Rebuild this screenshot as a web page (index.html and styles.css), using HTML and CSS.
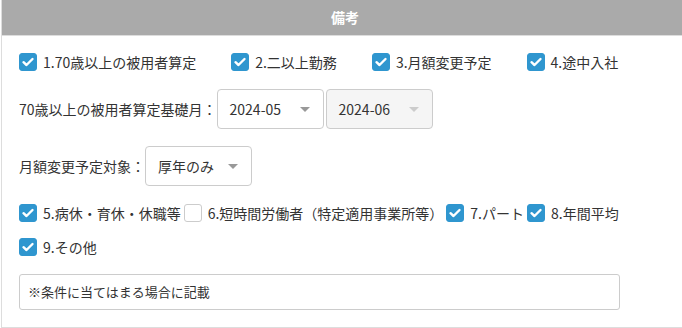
FILE: index.html
```html
<!DOCTYPE html>
<html lang="ja">
<head>
    <meta charset="UTF-8">
    <title>備考</title>
    <link rel="stylesheet" href="styles.css">
</head>
<body>
    <div class="panel">
        <div class="panel-header">備考</div>
        <div class="panel-body">

            <!-- 区分チェック -->
            <div class="check-row wide">
                <label class="check"><span class="box on"></span>1.70歳以上の被用者算定</label>
                <label class="check"><span class="box on"></span>2.二以上勤務</label>
                <label class="check"><span class="box on"></span>3.月額変更予定</label>
                <label class="check"><span class="box on"></span>4.途中入社</label>
            </div>

            <div class="field-row">
                <span class="field-label">70歳以上の被用者算定基礎月：</span>
                <div class="select">2024-05<span class="caret"></span></div>
                <div class="select disabled">2024-06<span class="caret"></span></div>
            </div>

            <div class="field-row">
                <span class="field-label">月額変更予定対象：</span>
                <div class="select">厚年のみ<span class="caret"></span></div>
            </div>

            <div class="check-row narrow">
                <label class="check"><span class="box on"></span>5.病休・育休・休職等</label>
                <label class="check"><span class="box"></span>6.短時間労働者（特定適用事業所等）</label>
                <label class="check"><span class="box on"></span>7.パート</label>
                <label class="check"><span class="box on"></span>8.年間平均</label>
                <label class="check"><span class="box on"></span>9.その他</label>
            </div>

            <div class="memo">※条件に当てはまる場合に記載</div>
        </div>
    </div>
</body>
</html>
```

FILE: styles.css
```css
/* Page */
body {
    margin: 0;
    font-family: "Noto Sans CJK JP", "Noto Sans", sans-serif;
    font-size: 14px;
    color: #333;
    background-color: #fff;
    overflow: hidden;
}

/* Panel */
.panel {
    margin-left: 1px;
    border-left: 1px solid #ddd;
    border-bottom: 1px solid #ddd;
}

.panel-header {
    height: 35px;
    line-height: 35px;
    background-color: #aaa;
    border-bottom: 1px solid #ddd;
    color: #fff;
    font-weight: bold;
    text-align: center;
    padding-left: 6px;
}

.panel-body {
    padding: 16px 0 17px 17px;
    display: flex;
    flex-direction: column;
    gap: 17px;
}

/* Checkboxes */
.check-row {
    display: flex;
    flex-wrap: wrap;
    align-items: center;
}

.check-row.wide {
    gap: 14px 35px;
}

.check-row.narrow {
    width: 640px;
    gap: 14px 3px;
}

.check {
    display: flex;
    align-items: center;
    height: 20px;
    line-height: 20px;
    white-space: nowrap;
}

.box {
    width: 18px;
    height: 18px;
    box-sizing: border-box;
    border: 1px solid #ccc;
    border-radius: 3px;
    margin-right: 6px;
    background-color: #fff;
}

.box.on {
    border-color: #2f96cf;
    background-color: #2f96cf;
    background-image: url("data:image/svg+xml,%3Csvg xmlns='http://www.w3.org/2000/svg' viewBox='0 0 18 18'%3E%3Cpath d='M4.5 9.2l3 2.8 6-6' fill='none' stroke='%23fff' stroke-width='2.4' stroke-linecap='round' stroke-linejoin='round'/%3E%3C/svg%3E");
    background-size: 18px 18px;
    background-position: center;
}

/* Selects */
.field-row {
    display: flex;
    align-items: center;
}

.select {
    width: 107px;
    height: 40px;
    box-sizing: border-box;
    border: 1px solid #ccc;
    border-radius: 4px;
    padding: 0 12px;
    display: flex;
    align-items: center;
    justify-content: space-between;
    margin-right: 2px;
    background-color: #fff;
}

.select.disabled {
    background-color: #f5f5f5;
}

.caret {
    width: 0;
    height: 0;
    border-left: 5px solid transparent;
    border-right: 5px solid transparent;
    border-top: 5px solid #999;
    margin-right: 1px;
}

.select.disabled .caret {
    border-top-color: #ccc;
}

/* Memo field */
.memo {
    width: 601px;
    height: 36px;
    box-sizing: border-box;
    border: 1px solid #ccc;
    border-radius: 3px;
    padding: 0 8px;
    font-size: 13px;
    line-height: 34px;
}
```
